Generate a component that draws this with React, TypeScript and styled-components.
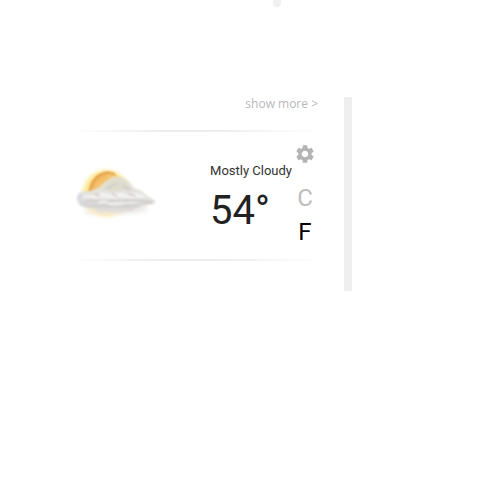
import React, { useState } from "react";
import styled, { createGlobalStyle } from "styled-components";
import { MdSettings } from "react-icons/md";

const GlobalStyle = createGlobalStyle`
  * { box-sizing: border-box; }
  body {
    margin: 0;
    background: #fff;
    font-family: Roboto, "Liberation Sans", sans-serif;
    color: #222;
  }
`;

const Page = styled.main`
  display: flex;
  flex-direction: column;
  gap: 90px;
  padding: 0 128px 0 70px;
`;

const PageDot = styled.span`
  align-self: flex-end;
  width: 8px;
  height: 7px;
  margin-right: 71px;
  border-radius: 0 0 4px 4px;
  background: #f0f0f0;
`;

const Panel = styled.section`
  display: flex;
  flex-direction: column;
  padding: 0 20px 30px 0;
  border-right: 8px solid #efefef;
`;

const MoreLink = styled.a`
  align-self: flex-end;
  margin: 0 6px 20px 0;
  font-family: "Open Sans", sans-serif;
  font-size: 12px;
  line-height: 13px;
  color: #b8b8b8;
  text-decoration: none;
`;

const Divider = styled.hr`
  width: 100%;
  height: 2px;
  margin: 0;
  border: 0;
  background: linear-gradient(to right, #fff, #ebebeb 40%, #eee 60%, #fff);
`;

const Weather = styled.div`
  display: grid;
  grid-template-columns: 1fr auto 26px;
  padding: 11px 6px 10px 0;
`;

const Picture = styled.svg`
  width: 88px;
  height: 64px;
  margin: 18px 0 0 4px;
`;

const Reading = styled.div`
  padding-top: 20px;
`;

const Condition = styled.div`
  font-size: 13px;
  line-height: 16px;
  color: #333;
`;

const Temperature = styled.div`
  margin-top: 8px;
  font-size: 40px;
  line-height: 48px;
`;

const Controls = styled.div`
  display: flex;
  flex-direction: column;
  align-items: center;
`;

const IconButton = styled.button`
  display: flex;
  margin-bottom: 16px;
  padding: 0;
  border: 0;
  background: none;
  color: #b4b4b4;
  font-size: 22px;
  cursor: pointer;
`;

const UnitButton = styled.button<{ $active: boolean }>`
  padding: 0;
  border: 0;
  background: none;
  font-family: inherit;
  font-size: 24px;
  line-height: 34px;
  color: ${({ $active }) => ($active ? "#000" : "#bdbdbd")};
  cursor: pointer;
`;

function CloudySun() {
  return (
    <Picture viewBox="0 0 88 64" role="img" aria-label="Mostly cloudy">
      <defs>
        <radialGradient id="glow">
          <stop offset="0.66" stopColor="#fbdf80" />
          <stop offset="0.82" stopColor="#fdf0b0" stopOpacity="0.85" />
          <stop offset="1" stopColor="#fffbe8" stopOpacity="0" />
        </radialGradient>
        <linearGradient id="sun" x1="0" y1="0" x2="1" y2="1">
          <stop offset="0" stopColor="#eda547" />
          <stop offset="0.45" stopColor="#f8c978" />
          <stop offset="1" stopColor="#fbe3ae" />
        </linearGradient>
        <linearGradient id="cloud" x1="0" y1="0" x2="0" y2="1">
          <stop offset="0" stopColor="#e3e0ce" />
          <stop offset="0.4" stopColor="#e3e3de" />
          <stop offset="0.65" stopColor="#e2e1e0" />
          <stop offset="0.85" stopColor="#d4d2d1" />
          <stop offset="1" stopColor="#e8e6e4" />
        </linearGradient>
        <filter id="soft" x="-20%" y="-30%" width="140%" height="160%">
          <feGaussianBlur stdDeviation="0.8" />
        </filter>
        <filter id="mist" x="-20%" y="-60%" width="140%" height="220%">
          <feGaussianBlur stdDeviation="2" />
        </filter>
      </defs>
      <circle cx="32" cy="32" r="27" fill="url(#glow)" />
      <path d="M15 34C15 20 23 12 32 11C41 11 48 17 49 26L44 42H18Z" fill="url(#sun)" filter="url(#soft)" />
      <path d="M16 31C18 20 24 13 32 12C35 11 39 12 41 14" fill="none" stroke="#df9b46" strokeWidth="2" filter="url(#soft)" />
      <ellipse cx="32" cy="50" rx="22" ry="4" fill="#f3e8d8" filter="url(#mist)" />
      <ellipse cx="54" cy="48" rx="20" ry="4" fill="#ebe9e8" filter="url(#mist)" />
      <g filter="url(#soft)">
        <path d="M5 32C10 29 15 31 20 29C26 27 29 22 34 19C38 15 46 14 51 18C56 20 58 26 62 28C67 28 71 33 75 36C79 38 82 40 81 42C77 44 71 44 65 46C57 50 49 49 41 50C32 52 24 48 17 47C11 47 5 45 4 41C2 37 3 34 5 32Z" fill="url(#cloud)" />
        <path d="M28 28C32 23 37 18 45 18C51 18 53 24 59 29C51 28 48 32 41 30C37 31 32 30 28 28Z" fill="#dfddce" />
        <path d="M8 35C14 33 21 36 28 32C37 34 45 29 54 34C62 30 69 34 73 37C64 36 57 39 47 36C38 39 31 35 23 38C16 36 11 38 8 35Z" fill="#f3f3f1" />
        <path d="M22 41C29 38 36 43 43 41C50 43 58 39 67 41C60 43 54 42 49 44C39 44 31 45 22 41Z" fill="#f3f1ef" />
        <path d="M12 40C18 38 21 41 26 39M34 41C38 38 42 41 46 40M49 40C57 38 67 40 78 41M34 27C38 25 40 23 43 23M49 24C51 27 53 28 56 29M21 33L25 35M38 33L43 35M55 33L61 35M29 43L36 45M46 45L55 44" fill="none" stroke="#cac8c6" strokeWidth="1.5" strokeLinecap="round" />
        <path d="M6 35C5 38 6 41 9 42" fill="none" stroke="#d8d8e2" strokeWidth="4" strokeLinecap="round" />
        <path d="M22 49C27 51 33 48 38 50C45 51 53 48 59 49" fill="none" stroke="#e0dad5" strokeWidth="2" />
      </g>
    </Picture>
  );
}

export default function App() {
  const [unit, setUnit] = useState<"C" | "F">("F");
  return (
    <>
      <GlobalStyle />
      <Page>
        <PageDot />
        <Panel>
          <MoreLink href="#more">show more &gt;</MoreLink>
          <Divider />
          <Weather>
            <CloudySun />
            <Reading>
              <Condition>Mostly Cloudy</Condition>
              <Temperature>{unit === "F" ? "54°" : "12°"}</Temperature>
            </Reading>
            <Controls>
              <IconButton type="button" aria-label="Settings">
                <MdSettings />
              </IconButton>
              <UnitButton type="button" $active={unit === "C"} aria-pressed={unit === "C"} onClick={() => setUnit("C")}>
                C
              </UnitButton>
              <UnitButton type="button" $active={unit === "F"} aria-pressed={unit === "F"} onClick={() => setUnit("F")}>
                F
              </UnitButton>
            </Controls>
          </Weather>
          <Divider />
        </Panel>
      </Page>
    </>
  );
}
